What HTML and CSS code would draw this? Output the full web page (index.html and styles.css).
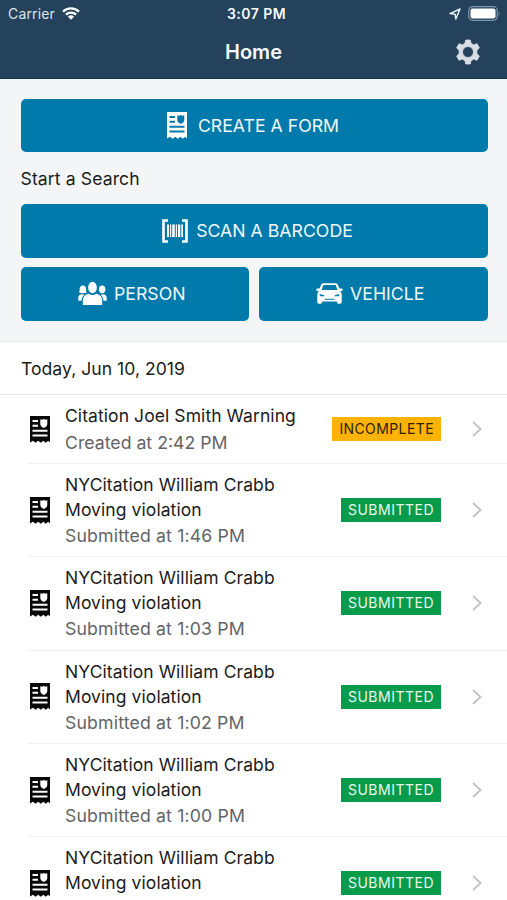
FILE: index.html
```html
<!DOCTYPE html>
<html lang="en">
<head>
<meta charset="utf-8">
<title>Home</title>
<link rel="stylesheet" href="styles.css">
</head>
<body>
<svg class="sprite" aria-hidden="true">
  <symbol id="form" viewBox="0 0 20 27">
    <path fill-rule="evenodd" d="M0 0H20V26.500L18.200 24.700L15.800 26.700L13.400 24.700L10.800 26.700L8.200 24.700L5.600 26.700L3 24.700L0 26.500ZM2.500 4V6H8V4ZM2.500 8.700V10.700H8V8.700ZM10.300 3.300V8C10.300 10 12 11.200 13.800 11.900C15.600 11.200 17.300 10 17.300 8V3.300L15.500 3.700L13.800 2.900L12 3.700ZM2.500 13.700V15.700H17.500V13.700ZM2.500 18.500V20.500H17.500V18.500Z"/>
  </symbol>
  <symbol id="chevron" viewBox="0 0 10 16"><path d="M1 1L8.500 8L1 15" fill="none" stroke="#c4c4c6" stroke-width="2"/></symbol>
</svg>
<header class="top">
  <div class="status">
    <div class="carrier"><span>Carrier</span>
      <svg width="18" height="13" viewBox="0 0 18 13"><g fill="none" stroke="#fff" stroke-width="2.300"><path d="M1 4.700A11.500 11.500 0 0 1 17 4.700"/><path d="M3.900 7.700A7.400 7.400 0 0 1 14.100 7.700"/></g><path fill="#fff" d="M5.900 9.600A4.500 4.500 0 0 1 12.100 9.600L9 12.700Z"/></svg>
    </div>
    <div class="time">3:07 PM</div>
    <div class="indicators">
      <svg width="12" height="12" viewBox="0 0 12 12"><path d="M1 5.600L11 1L6.800 11L6.100 6.300Z" fill="none" stroke="#e8f0f6" stroke-width="1.500" stroke-linejoin="round"/></svg>
      <svg width="33" height="15" viewBox="0 0 33 15"><rect x=".7" y=".7" width="28.600" height="13.600" rx="4" fill="none" stroke="#8194a7" stroke-width="1.200"/><rect x="2.500" y="2.500" width="25" height="10" rx="2" fill="#fff"/><path d="M30.800 5.200Q32.500 7.500 30.800 9.800Z" fill="#8194a7"/></svg>
    </div>
  </div>
  <div class="nav">
    <h1>Home</h1>
    <svg class="gear" width="24" height="26" viewBox="0 0 24 26"><path fill="#d9dee5" stroke="#d9dee5" stroke-width=".8" stroke-linejoin="round" fill-rule="evenodd" d="M9.700 1H14.300L15 4.300L17.700 5.900L21 4.700L23.400 8.900L20.900 11.300V14.700L23.400 17.100L21 21.300L17.700 20.100L15 21.700L14.300 25H9.700L9 21.700L6.300 20.100L3 21.300L.6 17.100L3.100 14.700V11.300L.6 8.900L3 4.700L6.300 5.900L9 4.300ZM12 7.500A5.500 5.500 0 1 0 12 18.500A5.500 5.500 0 1 0 12 7.500Z"/></svg>
  </div>
</header>
<section class="actions">
  <button class="btn create"><svg width="20" height="27"><use href="#form"/></svg><span>CREATE A FORM</span></button>
  <h2>Start a Search</h2>
  <button class="btn scan">
    <svg width="26" height="24" viewBox="0 0 26 24"><path d="M6 1.500H1.500V22.500H6M20 1.500H24.500V22.500H20" fill="none" stroke="#fff" stroke-width="2.600"/><path fill="#fff" d="M5 5.500h2v12.500h-2zM8 5.500h1.200v12.500h-1.200zM10.200 5.500h2.600v12.500h-2.600zM13.800 5.500h1.200v12.500h-1.200zM16 5.500h2.300v12.500h-2.300zM19.300 5.500h1.700v12.500h-1.700z"/></svg>
    <span>SCAN A BARCODE</span></button>
  <div class="pair">
    <button class="btn person">
      <svg width="29" height="25" viewBox="0 0 30 25" fill="#fff"><ellipse cx="15" cy="6.300" rx="4.500" ry="6"/><path d="M5 24.500V19.500Q5 14 11 12.700Q15 15.300 19 12.700Q25 14 25 19.500V24.500Z"/><path d="M5 4.200C7.500 4.200 8.500 6 8.300 8.300C8.200 10 8.700 10.500 9.300 11.300Q7 12.500 5 12.300Q2.500 12.300.9 11.300C1.700 10.300 1.600 9.500 1.700 8C1.800 5.700 3 4.200 5 4.200Z"/><ellipse cx="25" cy="8.200" rx="3.300" ry="4"/><path d="M.3 20V17Q.3 14 3.700 13.200L6.500 13.900Q3.800 15.800 3.600 20ZM29.700 20V17Q29.700 14 26.300 13.200L23.500 13.900Q26.200 15.800 26.400 20Z"/></svg>
      <span>PERSON</span></button>
    <button class="btn vehicle">
      <svg width="27" height="21" viewBox="0 0 28 21" preserveAspectRatio="none"><path fill="#fff" fill-rule="evenodd" d="M7.500.3H20.500Q22 .3 22.700 1.800L24.300 5.500H26.500Q27.700 5.500 27.700 6.700T26.500 8H25Q26.700 9.700 26.700 12V19Q26.700 20.700 25 20.700H23.300Q21.700 20.700 21.700 18.500H6.300Q6.300 20.700 4.700 20.700H3Q1.300 20.700 1.300 19V12Q1.300 9.700 3 8H1.500Q.3 8 .3 6.700T1.500 5.500H3.700L5.300 1.800Q6 .3 7.500.3ZM7.600 2L5.700 7H22.300L20.400 2ZM3.500 11L4.500 13.200H9L8 12ZM24.500 11L23.500 13.200H19L20 12ZM9 16.800H19V15.800H9Z"/></svg>
      <span>VEHICLE</span></button>
  </div>
</section>
<h2 class="date"><span>Today, Jun 10, 2019</span></h2>
<main class="list">
  <article class="row short">
    <svg class="doc"><use href="#form"/></svg>
    <div class="copy"><p>Citation Joel Smith Warning</p><p class="sub created">Created at 2:42 PM</p></div><span class="badge incomplete">INCOMPLETE</span><svg class="chev"><use href="#chevron"/></svg>
  </article>
  <article class="row">
    <svg class="doc"><use href="#form"/></svg>
    <div class="copy"><p>NYCitation William Crabb</p><p>Moving violation</p><p class="sub">Submitted at 1:46 PM</p></div><span class="badge">SUBMITTED</span><svg class="chev"><use href="#chevron"/></svg>
  </article>
  <article class="row">
    <svg class="doc"><use href="#form"/></svg>
    <div class="copy"><p>NYCitation William Crabb</p><p>Moving violation</p><p class="sub">Submitted at 1:03 PM</p></div><span class="badge">SUBMITTED</span><svg class="chev"><use href="#chevron"/></svg>
  </article>
  <article class="row">
    <svg class="doc"><use href="#form"/></svg>
    <div class="copy"><p>NYCitation William Crabb</p><p>Moving violation</p><p class="sub">Submitted at 1:02 PM</p></div><span class="badge">SUBMITTED</span><svg class="chev"><use href="#chevron"/></svg>
  </article>
  <article class="row">
    <svg class="doc"><use href="#form"/></svg>
    <div class="copy"><p>NYCitation William Crabb</p><p>Moving violation</p><p class="sub">Submitted at 1:00 PM</p></div><span class="badge">SUBMITTED</span><svg class="chev"><use href="#chevron"/></svg>
  </article>
  <article class="row">
    <svg class="doc"><use href="#form"/></svg>
    <div class="copy"><p>NYCitation William Crabb</p><p>Moving violation</p></div><span class="badge">SUBMITTED</span><svg class="chev"><use href="#chevron"/></svg>
  </article>
</main>
</body>
</html>
```
FILE: styles.css
```css
* { box-sizing: border-box; }
html, body { height: 900px; overflow: hidden; }
body { margin: 0; background: #fff; color: #1b1b1b; font-family: Inter, "Liberation Sans", sans-serif; font-size: 17.5px; }
h1, h2, p { margin: 0; font-weight: 400; white-space: nowrap; }
h2 { font-size: 17.6px; }
svg { display: block; flex: none; }
.sprite { display: none; }
.top { height: 79px; background: #24425c; color: #f5f8fb; border-bottom: 1px solid #19364f; }
.status { height: 27px; display: grid; grid-template-columns: 1fr auto 1fr; align-items: center; padding: 0 6px 0 8px; }
.carrier { display: flex; align-items: center; gap: 7px; font-size: 14px; letter-spacing: .15px; color: #dce5ec; }
.time { font-size: 14px; font-weight: 600; letter-spacing: .45px; padding-left: 4px; }
.indicators { display: flex; align-items: center; justify-content: flex-end; gap: 7px; }
.nav { height: 50px; display: grid; grid-template-columns: 1fr auto 1fr; align-items: center; padding: 0 27px; }
.nav h1 { grid-column: 2; font-size: 20px; font-weight: 600; }
.gear { justify-self: end; }
.actions { height: 263px; background: #f3f5f7; border-bottom: 1px solid #e9ebed; padding: 19.5px 19.5px 0 20.5px; }
.actions h2 { height: 52px; line-height: 53px; letter-spacing: .1px; }
.btn { width: 100%; height: 53.5px; border: 0; border-radius: 5px; background: #007aaa; color: #f0f8fc; fill: #fff; padding: 0; display: flex; align-items: center; justify-content: center; gap: 8px; font: 400 17.7px Inter, "Liberation Sans", sans-serif; white-space: nowrap; }
.create { gap: 11px; padding-right: 2px; }
.scan { padding-left: 7px; }
.pair { display: grid; grid-template-columns: 1fr 1fr; gap: 10px; padding-top: 9.5px; }
.person, .vehicle { gap: 7px; padding-right: 6px; }
.date { height: 53px; line-height: 53px; padding-left: 21px; border-bottom: 1px solid #e5e6e8; letter-spacing: .02px; }
.row { height: 93.3px; display: flex; align-items: center; margin-left: 28px; padding-left: 2px; border-bottom: 1px solid #f1f1f2; }
.short { height: 69px; }
.doc { width: 20px; height: 27px; fill: #080808; }
.copy { flex: 1; align-self: flex-start; margin-left: 15px; padding-top: 8px; line-height: 25px; letter-spacing: .08px; }
.sub { color: #646466; line-height: 28px; font-size: 17.7px; letter-spacing: .15px; }
.created { line-height: 29px; letter-spacing: 0; }
.badge { height: 24px; line-height: 24px; padding: 0 7px; background: #079b4b; color: #e8f8ed; font-size: 14px; letter-spacing: .5px; }
.incomplete { background: #fdb306; color: #2e2108; letter-spacing: .4px; }
.chev { width: 10px; height: 16px; margin: 0 25px 0 31px; }
```
